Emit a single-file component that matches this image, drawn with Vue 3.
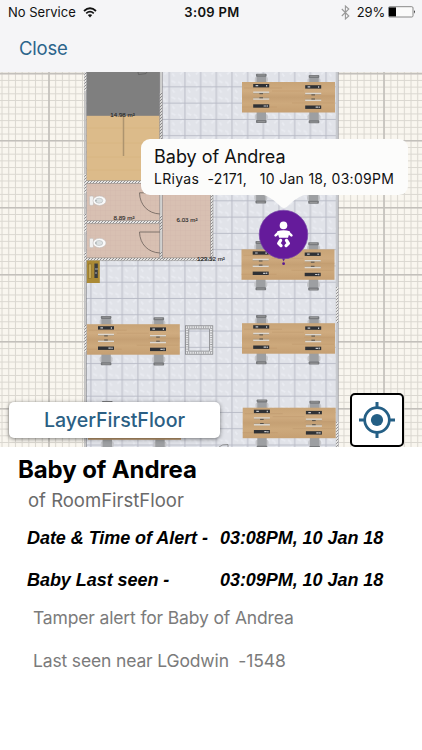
<template>
  <div class="screen">
    <header class="top-bar">
      <div class="status-bar">
        <div class="status-left">
          <span class="carrier">No Service</span>
          <svg class="wifi" width="14" height="11" viewBox="0 0 14 11">
            <path d="M1 4 Q7 -1.4 13 4" fill="none" stroke="#111" stroke-width="1.8" />
            <path d="M3.2 6.3 Q7 3 10.8 6.3" fill="none" stroke="#111" stroke-width="1.7" />
            <path d="M4.8 8.1 Q7 6.3 9.2 8.1 L7 10.5 Z" fill="#111" />
          </svg>
        </div>
        <span class="clock">3:09 PM</span>
        <div class="status-right">
          <svg class="bluetooth" width="9" height="15" viewBox="0 0 9 15">
            <path d="M.8 4 L7.8 11 L4.4 14 V1 L7.8 4 L.8 11" fill="none" stroke="#999" stroke-width="1.1" />
          </svg>
          <span class="percent">29%</span>
          <svg class="battery" width="28" height="12" viewBox="0 0 28 12">
            <rect x=".5" y=".7" width="24.5" height="10.3" rx="1.2" fill="#fafafa" stroke="#888" />
            <rect x="1" y="1.4" width="7" height="9" fill="#000" />
            <path d="M26 4 Q27.8 5.8 26 7.8 Z" fill="#111" />
          </svg>
        </div>
      </div>
      <button class="close">Close</button>
    </header>

    <section class="map">
      <svg class="plan" width="422" height="375" viewBox="0 72 422 375">
        <defs>
          <pattern id="paper" width="6.705" height="6.705" patternUnits="userSpaceOnUse" x="45.6" y="70.35">
            <rect width="6.705" height="6.705" fill="#f9f6ef" />
            <path d="M3.35 0 V6.705 M0 3.35 H6.705" stroke="#dad7d0" stroke-width="1" />
          </pattern>
          <pattern id="tiles" width="15.68" height="16.28" patternUnits="userSpaceOnUse" x="161.5" y="95">
            <rect width="15.68" height="16.28" fill="#e1e3e9" />
            <path d="M1 3 l3 2 M10 2 l4 2 M3 12 l3 -3 M11 11 l2 3 M5 6 l-2 1" stroke="#e9ebf1" stroke-width="1.8" />
            <path d="M7.8 0 V16.28 M0 8.1 H15.68" stroke="#b5b9c5" stroke-width=".9" />
          </pattern>
          <pattern id="hatch" width="3" height="3" patternUnits="userSpaceOnUse">
            <rect width="3" height="3" fill="#e9e8e6" />
            <path d="M0 3 L3 0" stroke="#77777a" stroke-width=".8" />
          </pattern>
          <pattern id="bath" width="5" height="5" patternUnits="userSpaceOnUse">
            <rect width="5" height="5" fill="#d8c0b2" />
            <path d="M0 0 H5 M0 0 V5" stroke="#d1b8aa" stroke-width=".7" />
          </pattern>
          <linearGradient id="wood" x1="0" y1="0" x2="0" y2="1">
            <stop offset="0" stop-color="#c8a477" />
            <stop offset=".3" stop-color="#cfab7f" />
            <stop offset=".5" stop-color="#c5a074" />
            <stop offset=".7" stop-color="#cda97c" />
            <stop offset="1" stop-color="#c6a073" />
          </linearGradient>

          <g id="chair">
            <rect x="-6.5" y="3" width="13" height="6" rx="2" fill="#c5c6ca" />
            <rect x="-4.7" y="1.5" width="9.4" height="11" fill="#9d9fa2" />
            <rect x="-5.3" y="0" width="10.6" height="3" rx=".8" fill="#77797c" />
            <path d="M-3.8 1.3 H3.8" stroke="#aaa" stroke-width=".6" />
          </g>
          <g id="station">
            <rect x="-8" y="2" width="16" height="3.4" fill="#2f3135" />
            <path d="M-5.6 3.7 H-3 M5.4 3 V4.6" stroke="#c9cacc" stroke-width="1.2" />
            <path d="M-8 10.3 H8 M-8 17 H8" stroke="#dcd8d1" stroke-width="1.5" />
            <path d="M-8 11.3 H8 M-8 15.9 H8" stroke="#a49580" stroke-width=".6" />
            <path d="M-1.8 11.7 H1.8 M-1.8 15.8 H1.8" stroke="#54504b" stroke-width="1" />
            <rect x="-8" y="22.3" width="16" height="3.4" fill="#2f3135" />
            <path d="M2.4 24 H4.8 M6 23.2 V24.8" stroke="#c9cacc" stroke-width="1.2" />
          </g>
          <g id="desk">
            <use href="#chair" x="19.3" y="-8.3" />
            <use href="#chair" x="72" y="-7" />
            <use href="#chair" transform="translate(19.3 41) scale(1 -1)" />
            <use href="#chair" transform="translate(72 41.3) scale(1 -1)" />
            <rect width="93" height="30.5" fill="url(#wood)" />
            <path d="M2 6 H40 M30 9 H62 M50 21 H92 M0 25 H35 M62 14 H93" stroke="#bd966a" stroke-width=".5" />
            <use href="#station" x="19.2" />
            <use href="#station" x="71.2" y="1.2" />
          </g>
          <g id="toilet">
            <rect x="0" y="-4.7" width="4" height="9.4" rx="1.3" fill="#f1f1f1" stroke="#b8b4b1" stroke-width=".5" />
            <ellipse cx="10" cy="0" rx="6.5" ry="4.7" fill="#fafafa" stroke="#bdb9b6" stroke-width=".5" />
            <ellipse cx="9.6" cy="0" rx="3.7" ry="2.5" fill="#dce1e2" stroke="#aab1b3" stroke-width=".5" />
            <circle cx="6.5" cy="0" r=".7" fill="#8d9698" />
          </g>
        </defs>

        <!-- grid paper around the building -->
        <rect y="72" width="422" height="375" fill="url(#paper)" />
        <path d="M49 72 V447 M384 72 V447 M0 73.6 H422 M0 140.7 H422 M0 207.7 H422 M0 274.8 H422 M0 341.8 H422 M0 408.8 H422" stroke="#c3c0bb" stroke-width="1.6" />

        <!-- office floor and outer walls -->
        <rect x="86" y="72" width="251" height="375" fill="url(#tiles)" />
        <path d="M84.8 72 V447" stroke="#c3c3c3" stroke-width="1.6" />
        <path d="M86.3 72 V447" stroke="#85868a" stroke-width=".8" />
        <path d="M337 72 V447" stroke="#c7c9ce" stroke-width="2.6" />
        <path d="M338.4 72 V447" stroke="#909196" stroke-width=".6" />
        <rect
          v-for="wall in outerWalls"
          :key="wall.join()"
          :x="wall[0] - 1"
          :y="wall[1]"
          width="2"
          :height="wall[2] - wall[1]"
          fill="url(#hatch)"
        />

        <!-- store room -->
        <rect x="86.7" y="72" width="73.3" height="44" fill="#7f7f7f" />
        <path d="M138 72 L138.5 74.6 L146 73.6 L147 72" fill="none" stroke="#555" stroke-width=".6" />
        <rect x="86.7" y="115.8" width="73.3" height="65.2" fill="#dcbb8a" />
        <path d="M87 128 H159 M87 143 H159 M87 157 H159 M87 170 H159" stroke="#d7b582" stroke-width=".8" />
        <path d="M123.5 117 V156" stroke="#ad946f" stroke-width="1.5" />

        <!-- bathrooms -->
        <rect x="86.7" y="183" width="124.3" height="75.5" fill="url(#bath)" />
        <rect x="86" y="180.7" width="75" height="2.6" fill="url(#hatch)" />
        <rect x="86" y="220.8" width="75" height="2.6" fill="url(#hatch)" />
        <rect x="86" y="258" width="126.5" height="2.4" fill="url(#hatch)" />
        <path d="M86 180.6 H161 M86 183.5 H161 M86 220.6 H161 M86 223.6 H161 M86 257.8 H212 M86 260.6 H212" stroke="#85807e" stroke-width=".5" />
        <rect x="159.8" y="72" width="2.4" height="187" fill="#dedddc" />
        <rect x="159.8" y="92" width="2.4" height="90" fill="url(#hatch)" />
        <rect x="159.8" y="215" width="2.4" height="16" fill="url(#hatch)" />
        <rect x="159.8" y="252" width="2.4" height="8" fill="url(#hatch)" />
        <path d="M159.8 72 V259 M162.3 72 V259" stroke="#77777a" stroke-width=".6" />
        <rect x="210.6" y="181" width="2.2" height="79.5" fill="url(#hatch)" />
        <path d="M210.5 181 V260 M213 181 V260" stroke="#85807e" stroke-width=".5" />
        <path d="M160 192.8 H139.5 C139.8 205 148 213.5 160 214 M160 232 H139.5 C139.8 244 148 252.5 160 253" fill="none" stroke="#756962" stroke-width=".9" />
        <use href="#toilet" x="89.5" y="200.7" />
        <use href="#toilet" x="89.5" y="243" />

        <!-- cabinet -->
        <rect x="86.8" y="260.5" width="13" height="22.5" fill="#ab8a35" />
        <rect x="88.5" y="264" width="3" height="14.5" fill="#c5aa5b" stroke="#806422" stroke-width=".5" />
        <rect x="94.4" y="263.5" width="3.4" height="14.5" fill="#3a3d40" />
        <path d="M95 269 H98 M95 273 H97" stroke="#bbb" stroke-width=".9" />

        <!-- pillar -->
        <rect x="187.2" y="327.3" width="24" height="25.4" fill="none" stroke="#e6e7e9" stroke-width="3" />
        <path d="M187 327.3 H211.5 M187 352.7 H211.5" stroke="#9a9b9e" stroke-width="2" stroke-dasharray=".8 1.5" />
        <path d="M187.2 328 V353 M211.2 328 V353" stroke="#9a9b9e" stroke-width="2" stroke-dasharray=".8 1.5" />
        <rect x="185.6" y="325.8" width="27.2" height="28.4" fill="none" stroke="#77787b" stroke-width=".7" />
        <rect x="188.8" y="328.9" width="20.8" height="22.2" fill="none" stroke="#77787b" stroke-width=".7" />
        <path d="M219 447 Q222 444 228 444.5 V447" fill="none" stroke="#777" stroke-width=".7" />

        <use v-for="desk in desks" :key="desk.x + '-' + desk.y" href="#desk" :x="desk.x" :y="desk.y" />

        <text v-for="area in areas" :key="area.label" class="area" :x="area.x" :y="area.y" text-anchor="middle">{{ area.label }}</text>

        <!-- baby marker -->
        <g class="marker">
          <path d="M281.5 257 L283.6 261.5 L285.7 257 Z" fill="#5b1a91" />
          <circle cx="283.6" cy="263.7" r="1.4" fill="#5b1a91" />
          <circle cx="283.5" cy="234.5" r="24.3" fill="#651b9b" stroke="#7747a8" stroke-width=".7" />
          <circle cx="283.5" cy="225.4" r="3.8" fill="#fff" />
          <path d="M277 231.4 Q283.5 229 290 231.4 L288 237.8 H279.2 Z" fill="#fff" />
          <path d="M279 232.2 L275.6 235.4 M288 232.2 L291.4 235.4" stroke="#fff" stroke-width="2.6" stroke-linecap="round" />
          <path d="M280.6 240.4 L278.7 243.3 L281 245.6 M286.5 240.4 L288.4 243.3 L286.1 245.6" fill="none" stroke="#fff" stroke-width="3.3" stroke-linecap="round" stroke-linejoin="round" />
        </g>
      </svg>

      <div class="callout">
        <svg class="callout-tail" width="50" height="15" viewBox="0 0 50 15">
          <path d="M0 0 H50 C41 1 34 7 30 11 C26 15 24 15 20 11 C16 7 9 1 0 0 Z" fill="#fcfcfb" />
        </svg>
        <div class="callout-title">{{ baby.name }}</div>
        <div class="callout-text">{{ baby.tag }}</div>
      </div>

      <button class="layer">LayerFirstFloor</button>
      <button class="locate">
        <svg width="36" height="36" viewBox="0 0 36 36">
          <circle cx="18" cy="18" r="12.3" fill="none" stroke="#245f85" stroke-width="2.7" />
          <circle cx="18" cy="18" r="6.1" fill="#245f85" />
          <path d="M18 0 V6 M18 30 V36 M0 18 H6 M30 18 H36" stroke="#245f85" stroke-width="3" />
        </svg>
      </button>
    </section>

    <section class="details">
      <h1 class="name">{{ baby.name }}</h1>
      <p class="room">of RoomFirstFloor</p>
      <div v-for="row in rows" :key="row.label" class="row">
        <span class="row-label">{{ row.label }}</span>
        <span class="row-value">{{ row.value }}</span>
      </div>
      <p class="note tamper">Tamper alert for Baby of Andrea</p>
      <p class="note last-seen">Last seen near LGodwin&nbsp; -1548</p>
    </section>
  </div>
</template>

<script setup>
import { ref } from 'vue';

const baby = ref({
  name: 'Baby of Andrea',
  tag: 'LRiyas  -2171,   10 Jan 18, 03:09PM'
});

const rows = ref([
  { label: 'Date & Time of Alert -', value: '03:08PM, 10 Jan 18' },
  { label: 'Baby Last seen -', value: '03:09PM, 10 Jan 18' }
]);

const desks = [
  { x: 242, y: 82 },
  { x: 241.5, y: 162.5 },
  { x: 241.5, y: 249.3 },
  { x: 242, y: 323.2 },
  { x: 86.8, y: 324.2 },
  { x: 242.7, y: 407.7 },
  { x: 88, y: 409.3 }
];

const areas = [
  { label: '14.98 m²', x: 122.5, y: 117.2 },
  { label: '8.89 m²', x: 124, y: 219.9 },
  { label: '6.03 m²', x: 187, y: 222 },
  { label: '129.32 m²', x: 211, y: 261 }
];

// x, top, bottom
const outerWalls = [
  [85.4, 72, 91],
  [85.4, 174, 193],
  [85.4, 214, 232],
  [85.4, 252, 262],
  [85.4, 325, 352],
  [337.2, 287, 323],
  [337.2, 422, 447]
];
</script>

<style>
body {
  margin: 0;
  background: #fff;
}
</style>

<style scoped>
.screen {
  width: 422px;
  height: 750px;
  overflow: hidden;
  background: #fff;
  font-family: Inter, "Liberation Sans", sans-serif;
}

button {
  margin: 0;
  padding: 0;
  border: none;
  font-family: inherit;
  cursor: pointer;
}

.top-bar {
  height: 72px;
  background: #f5f5f7;
}

.status-bar {
  display: grid;
  grid-template-columns: 1fr auto 1fr;
  align-items: center;
  height: 24px;
  padding: 0 6px 0 8px;
  font-size: 13px;
  color: #111;
}

.status-left,
.status-right {
  display: flex;
  align-items: center;
}

.status-right {
  justify-content: flex-end;
}

.carrier {
  letter-spacing: 0;
}

.wifi {
  margin-left: 7px;
}

.clock {
  font-weight: 600;
  letter-spacing: 0.35px;
}

.percent {
  margin: 0 3px 0 7px;
  letter-spacing: -0.2px;
}

.close {
  display: block;
  margin: 12px 0 0 19px;
  background: none;
  font-size: 18.5px;
  letter-spacing: -0.2px;
  line-height: 24px;
  color: #2b648b;
}

.map {
  position: relative;
  height: 375px;
}

.plan {
  display: block;
}

.area {
  font-family: "Liberation Sans", sans-serif;
  font-size: 6.2px;
  fill: #222;
  stroke: #222;
  stroke-width: 0.1px;
}

.callout {
  position: absolute;
  left: 141px;
  top: 67px;
  width: 267px;
  height: 56px;
  box-sizing: border-box;
  padding: 6px 0 0 13px;
  border-radius: 9px;
  background: #fcfcfb;
  color: #111;
}

.callout-tail {
  position: absolute;
  left: 118px;
  top: 55px;
}

.callout-title {
  font-size: 18px;
  line-height: 24px;
}

.callout-text {
  font-size: 14px;
  letter-spacing: 0.29px;
  line-height: 19px;
  white-space: pre;
}

.layer {
  position: absolute;
  left: 9px;
  top: 330px;
  width: 211px;
  height: 36px;
  border-radius: 5px;
  background: #fff;
  box-shadow: 0 1px 4px rgba(0, 0, 0, 0.5);
  font-size: 19.6px;
  font-weight: 500;
  color: #2b5f84;
}

.locate {
  position: absolute;
  left: 350px;
  top: 321px;
  width: 54px;
  height: 54px;
  display: flex;
  align-items: center;
  justify-content: center;
  border: 2px solid #000;
  border-radius: 5px;
  background: #fff;
}

.details {
  padding-top: 8px;
}

.name {
  margin: 0 0 0 18px;
  font-size: 24px;
  letter-spacing: -0.1px;
  line-height: 30px;
  font-weight: 700;
  color: #000;
}

.room {
  margin: 3px 0 0 28px;
  font-size: 18.5px;
  line-height: 24px;
  color: #6a6a6a;
}

.row {
  display: flex;
  height: 42px;
  padding-left: 27px;
  align-items: center;
  font-family: "Liberation Sans", Arial, sans-serif;
  font-size: 18px;
  letter-spacing: -0.05px;
  font-weight: 700;
  font-style: italic;
  color: #000;
  white-space: nowrap;
}

.room + .row {
  margin-top: 5px;
}

.row-label {
  width: 193px;
}

.note {
  margin: 0 0 0 33px;
  font-size: 17.5px;
  letter-spacing: -0.15px;
  line-height: 24px;
  color: #7b7b7b;
}

.tamper {
  margin-top: 5px;
}

.last-seen {
  margin-top: 19px;
}
</style>
